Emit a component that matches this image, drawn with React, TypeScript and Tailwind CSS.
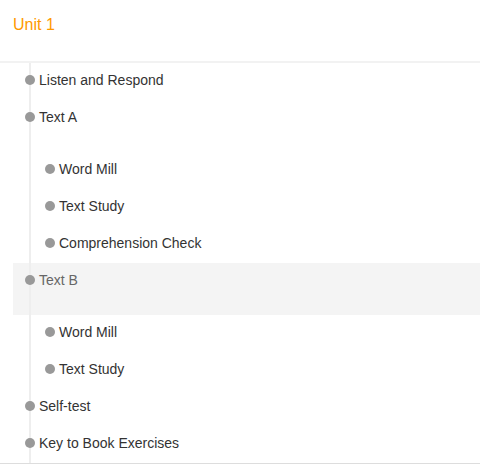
import React from "react";

type Item = { label: string; level: 0 | 1; parent?: boolean; active?: boolean };

const items: Item[] = [
  { label: "Listen and Respond", level: 0 },
  { label: "Text A", level: 0, parent: true },
  { label: "Word Mill", level: 1 },
  { label: "Text Study", level: 1 },
  { label: "Comprehension Check", level: 1 },
  { label: "Text B", level: 0, parent: true, active: true },
  { label: "Word Mill", level: 1 },
  { label: "Text Study", level: 1 },
  { label: "Self-test", level: 0 },
  { label: "Key to Book Exercises", level: 0 },
];

export default function App() {
  return (
    <div
      className="w-[480px] h-[467px] bg-white overflow-hidden"
      style={{ fontFamily: '"Liberation Sans", Arial, sans-serif' }}
    >
      <div className="h-[63px] border-b-2 border-[#f2f2f2] pl-[13px] pt-[14px]">
        <div className="text-[16px] leading-[22px] text-[#ff9900]">Unit 1</div>
      </div>
      <div className="relative border-b border-[#dddddd]">
        <div className="absolute left-[29px] top-0 bottom-0 w-[2px] bg-[#eeeeee] z-10" />
        {items.map((it, i) => (
          <div
            key={i}
            className={
              "flex items-start ml-[13px] " +
              (it.parent ? "h-[52px] " : "h-[37px] ") +
              (it.active ? "bg-[#f4f4f4] " : "")
            }
          >
            <div
              className={
                "flex items-center h-[34px] " + (it.level === 1 ? "pl-[32px]" : "pl-[12px]")
              }
            >
              <span className="relative z-20 shrink-0 w-[10px] h-[10px] rounded-full bg-[#999999] mr-[4px]" />
              <span
                className={
                  "text-[14px] " + (it.active ? "text-[#666666]" : "text-[#333333]")
                }
              >
                {it.label}
              </span>
            </div>
          </div>
        ))}
      </div>
    </div>
  );
}
